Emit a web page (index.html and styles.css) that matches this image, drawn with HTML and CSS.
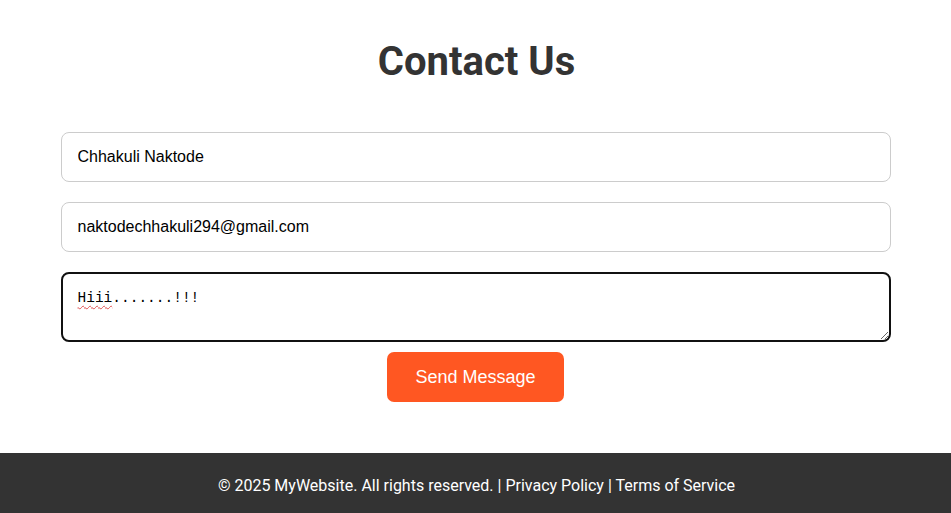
FILE: index.html
```html
<!DOCTYPE html>
<html lang="en">
<head>
<meta charset="utf-8">
<title>Contact Us</title>
<link rel="stylesheet" href="styles.css">
</head>
<body>
<main class="contact">
  <h2 class="contact-title">Contact Us</h2>
  <form class="contact-form">
    <input class="field" type="text" value="Chhakuli Naktode">
    <input class="field" type="email" value="naktodechhakuli294@gmail.com">
    <div class="area-wrap">
      <textarea class="field field-area" spellcheck="false">Hiii.......!!!</textarea>
      <span class="spell-mark" aria-hidden="true">Hiii</span>
    </div>
    <button class="send-btn" type="button">Send Message</button>
  </form>
</main>
<footer class="site-footer">
  <p class="footer-text">© 2025 MyWebsite. All rights reserved. | Privacy Policy | Terms of Service</p>
</footer>
</body>
</html>
```
FILE: styles.css
```css
html, body {
  margin: 0;
  padding: 0;
  background: #fff;
}
body {
  font-family: Roboto, "Liberation Sans", Arial, sans-serif;
  color: #333;
}
.contact {
  max-width: 830px;
  margin: 0 auto;
  padding: 38px 0 51px;
}
.contact-title {
  margin: 0 0 47px;
  text-align: center;
  font-family: Roboto, sans-serif;
  font-weight: 700;
  font-size: 40px;
  line-height: 47px;
  color: #333;
  padding-left: 2px;
}
.contact-form {
  display: flex;
  flex-direction: column;
  align-items: center;
}
.field {
  box-sizing: border-box;
  width: 100%;
  height: 50px;
  padding: 15px 16px;
  margin: 0 0 20px;
  border: 1px solid #ccc;
  border-radius: 8px;
  font-family: "Liberation Sans", Arial, sans-serif;
  font-size: 16px;
  color: #000;
  background: #fff;
  outline: none;
}
.area-wrap {
  position: relative;
  width: 100%;
  margin-bottom: 10px;
}
.field-area {
  display: block;
  height: 70px;
  margin: 0;
  border: 2px solid #111;
  font-family: "Liberation Mono", "DejaVu Sans Mono", monospace;
  font-size: 14.5px;
  line-height: 17px;
  padding: 16px 15px;
  resize: vertical;
}
.spell-mark {
  position: absolute;
  left: 17px;
  top: 18px;
  font-family: "Liberation Mono", "DejaVu Sans Mono", monospace;
  font-size: 14.5px;
  line-height: 17px;
  color: transparent;
  text-decoration: underline wavy #e05050;
  text-decoration-thickness: 1px;
  text-underline-offset: 3px;
  pointer-events: none;
}
.send-btn {
  height: 50px;
  padding: 0 28px;
  border: none;
  border-radius: 7px;
  background: #ff5722;
  color: #fff;
  font-family: "Liberation Sans", Arial, sans-serif;
  font-size: 18px;
  cursor: pointer;
}
.site-footer {
  background: #333;
  color: #fff;
  text-align: center;
  padding: 23px 0;
}
.footer-text {
  margin: 0;
  font-family: Roboto, sans-serif;
  font-size: 16px;
  line-height: 19px;
  padding-left: 2px;
}
```
